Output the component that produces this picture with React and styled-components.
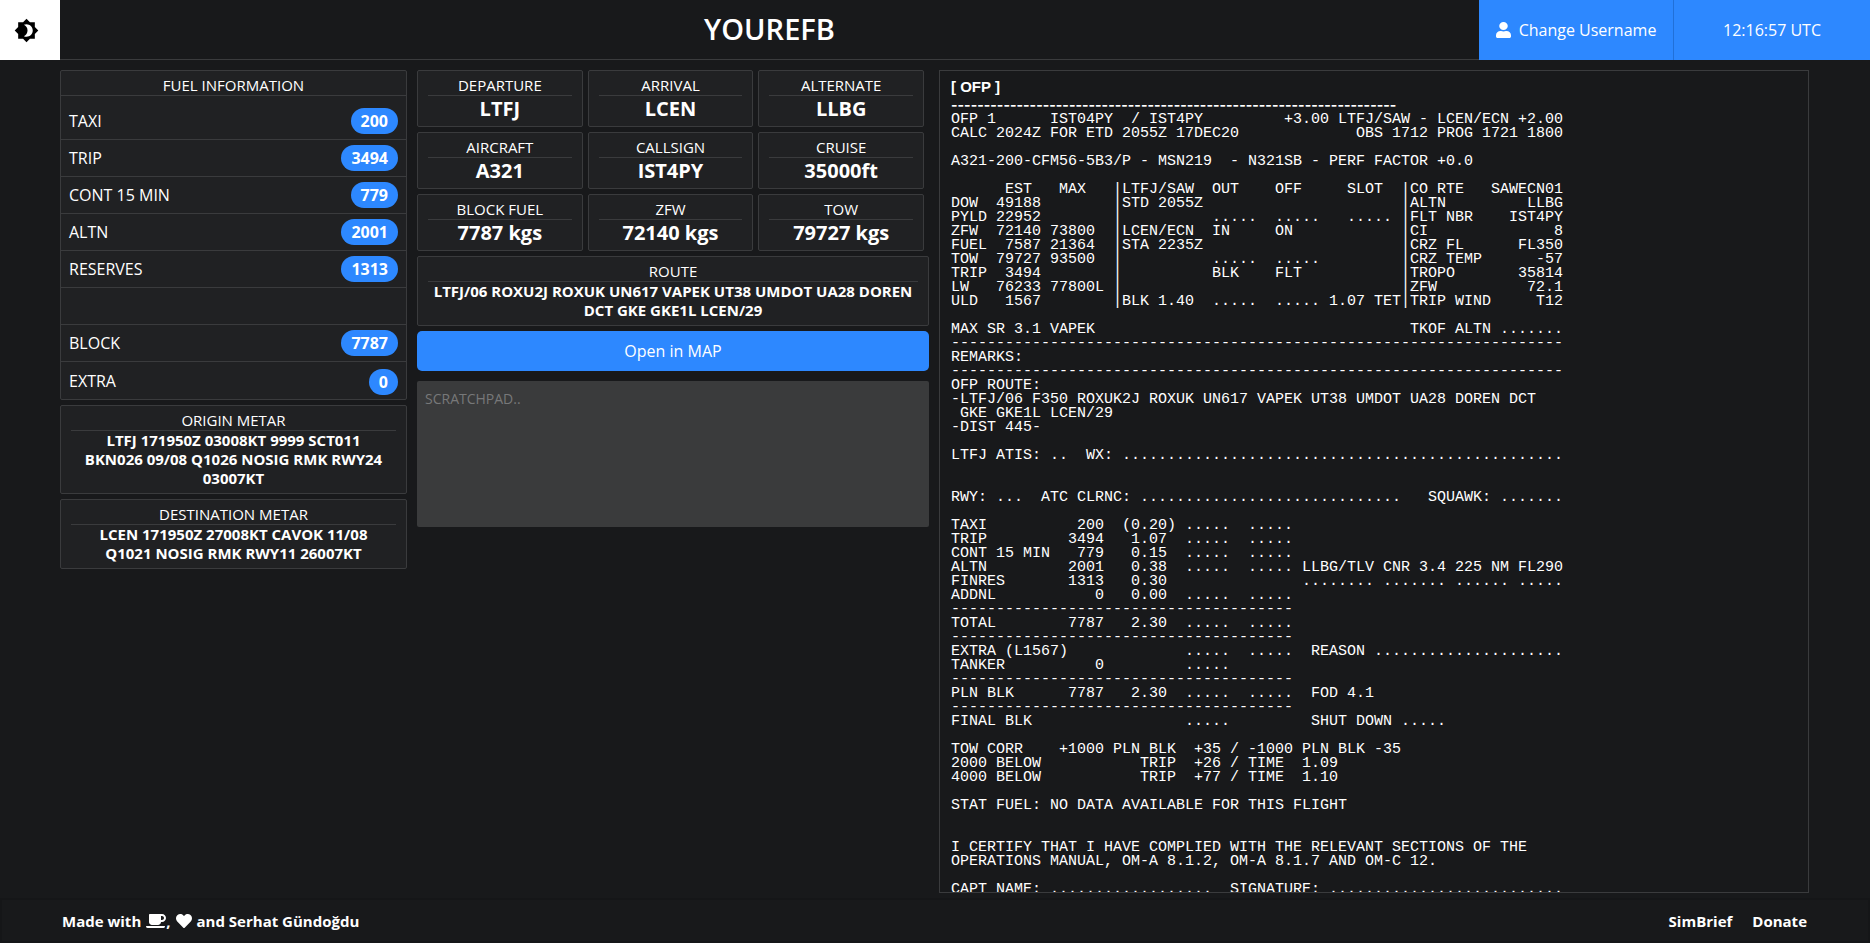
import React from "react";
import styled, { createGlobalStyle, ThemeProvider } from "styled-components";
import { MdBrightness4 } from "react-icons/md";
import { FaUser, FaCoffee, FaHeart } from "react-icons/fa";

const theme = {
  page: "#18191b",
  panel: "#202123",
  line: "#3a3b3d",
  field: "#3a3b3c",
  accent: "#2d88ff",
  accentLine: "#2170d8",
  text: "#ffffff",
  muted: "#777879",
};

const GlobalStyle = createGlobalStyle`
  *, *::before, *::after { box-sizing: border-box; }
  body {
    margin: 0;
    background: ${theme.page};
    color: ${theme.text};
    font-family: "Open Sans", "Noto Sans", sans-serif;
    font-size: 16px;
    line-height: 19px;
  }
  button, textarea { font-family: inherit; }
`;

const Page = styled.div`
  display: flex;
  flex-direction: column;
  height: 100vh;
`;

const Header = styled.header`
  display: flex;
  flex: none;
  height: 60px;
`;

const ThemeToggle = styled.button`
  display: flex;
  align-items: center;
  justify-content: center;
  width: 60px;
  padding: 0 8px 0 0;
  border: 0;
  background: #fff;
  color: #000;
  cursor: pointer;
  svg { width: 25px; height: 25px; }
`;

const TitleBar = styled.div`
  display: flex;
  flex: 1;
  align-items: center;
  justify-content: center;
  padding-bottom: 2px;
  border-bottom: 1px solid ${(p) => p.theme.line};
`;

const Title = styled.h1`
  margin: 0;
  font-size: 29px;
  line-height: 32px;
  font-weight: 600;
`;

const UserButton = styled.button`
  display: flex;
  align-items: center;
  justify-content: center;
  gap: 8px;
  width: 195px;
  padding: 0;
  border: 0;
  border-right: 1px solid ${(p) => p.theme.accentLine};
  background: ${(p) => p.theme.accent};
  color: ${(p) => p.theme.text};
  font-size: 16px;
  cursor: pointer;
  svg { width: 15px; height: 16px; }
`;

const Clock = styled.time`
  display: flex;
  align-items: center;
  justify-content: center;
  width: 196px;
  background: ${(p) => p.theme.accent};
`;

const Main = styled.main`
  display: grid;
  grid-template-columns: 347fr 512fr 870fr;
  grid-template-rows: minmax(0, 1fr);
  gap: 10px;
  flex: 1;
  min-height: 0;
  padding: 10px 61px 5px 60px;
`;

const Column = styled.div`
  display: flex;
  flex-direction: column;
  gap: 5px;
  min-width: 0;
`;

const Panel = styled.section`
  border: 1px solid ${(p) => p.theme.line};
  border-radius: 2px;
  background: ${(p) => p.theme.panel};
  text-align: center;
`;

const PanelTitle = styled.h2`
  margin: 0 ${(p) => (p.$full ? 0 : 10)}px;
  padding-top: 5px;
  border-bottom: 1px solid ${(p) => p.theme.line};
  font-size: 15px;
  line-height: 19px;
  font-weight: 400;
`;

const PanelText = styled.p`
  margin: 0;
  padding: 0 ${(p) => (p.$wide ? 4 : 20)}px 5px;
  font-size: 15px;
  line-height: 19px;
  font-weight: 700;
`;

const PanelValue = styled.p`
  margin: 0;
  padding-bottom: 5px;
  font-size: 20px;
  line-height: 25px;
  font-weight: 700;
`;

const FuelList = styled.ul`
  margin: 0;
  padding: 7px 0 0;
  list-style: none;
`;

const FuelRow = styled.li`
  display: flex;
  align-items: center;
  justify-content: space-between;
  height: 37px;
  padding: 0 8px;
  border-bottom: 1px solid ${(p) => p.theme.line};
  font-weight: 500;
  &:last-child { padding-top: 2px; border-bottom: 0; }
`;

const Badge = styled.span`
  padding: 0 10px;
  border-radius: 13px;
  background: ${(p) => p.theme.accent};
  font-weight: 700;
  line-height: 26px;
`;

const StatGrid = styled.div`
  display: grid;
  grid-template-columns: repeat(3, 1fr);
  gap: 5px;
  padding-right: 5px;
`;

const MapButton = styled.button`
  height: 40px;
  border: 0;
  border-radius: 5px;
  background: ${(p) => p.theme.accent};
  color: ${(p) => p.theme.text};
  font-size: 16px;
  cursor: pointer;
`;

const Scratchpad = styled.textarea`
  height: 146px;
  margin-top: 5px;
  padding: 8px;
  border: 0;
  border-radius: 2px;
  background: ${(p) => p.theme.field};
  color: ${(p) => p.theme.text};
  font-size: 14px;
  line-height: 19px;
  resize: none;
  &::placeholder { color: ${(p) => p.theme.muted}; opacity: 1; }
`;

const PlanPanel = styled.section`
  overflow-y: auto;
  scrollbar-width: none;
  padding: 7px 10px 10px 11px;
  border: 1px solid ${(p) => p.theme.line};
`;

const PlanTitle = styled.h2`
  margin: 0 0 2px;
  font: 700 15px/17px "Liberation Sans", Arial, sans-serif;
`;

const PlanRule = styled.div`
  padding-bottom: 1px;
  font: 700 14px/15px Inter, sans-serif;
  white-space: nowrap;
`;

const PlanText = styled.pre`
  margin: 0;
  font: 400 15px/14px "Liberation Mono", "Courier New", monospace;
`;

const Footer = styled.footer`
  display: flex;
  flex: none;
  align-items: center;
  justify-content: space-between;
  height: 45px;
  padding: 1px 61px 0 60px;
  border: 2px solid #151618;
  font-size: 15px;
  font-weight: 700;
`;

const Credit = styled.p`
  display: flex;
  align-items: center;
  gap: 5px;
  margin: 0;
`;

const CreditIcon = styled.span`
  display: flex;
  align-items: center;
  svg { width: ${(p) => p.$width}px; height: 16px; }
`;

const FooterLinks = styled.nav`
  display: flex;
  gap: 20px;
`;

const FooterLink = styled.a`
  color: inherit;
  text-decoration: none;
`;

const fuel = [
  ["TAXI", 200],
  ["TRIP", 3494],
  ["CONT 15 MIN", 779],
  ["ALTN", 2001],
  ["RESERVES", 1313],
  null,
  ["BLOCK", 7787],
  ["EXTRA", 0],
];

const metars = [
  ["ORIGIN METAR", "LTFJ 171950Z 03008KT 9999 SCT011 BKN026 09/08 Q1026 NOSIG RMK RWY24 03007KT"],
  ["DESTINATION METAR", "LCEN 171950Z 27008KT CAVOK 11/08 Q1021 NOSIG RMK RWY11 26007KT"],
];

const stats = [
  ["DEPARTURE", "LTFJ"],
  ["ARRIVAL", "LCEN"],
  ["ALTERNATE", "LLBG"],
  ["AIRCRAFT", "A321"],
  ["CALLSIGN", "IST4PY"],
  ["CRUISE", "35000ft"],
  ["BLOCK FUEL", "7787 kgs"],
  ["ZFW", "72140 kgs"],
  ["TOW", "79727 kgs"],
];

const route = "LTFJ/06 ROXU2J ROXUK UN617 VAPEK UT38 UMDOT UA28 DOREN DCT GKE GKE1L LCEN/29";

/* The flight plan is printed on a 68 column sheet. */
const SHEET = 68;
const dots = (n) => ".".repeat(n);
const rule = (n) => "-".repeat(n);

/* Each field is [column, text]. */
const line = (...fields) =>
  fields.reduce((out, [col, text]) => out.padEnd(col) + text, "");

const right = (text) => [SHEET - text.length, text];

/* One line of the load table: left figures, times and the route summary. */
const load = (left, mid, label, value) =>
  line(...left, [18, "|"], ...mid, [50, "|"], [51, label], right(value));

const fuelLine = (name, qty, time, slots = [26, 33], extra = []) =>
  line([0, name], [17 - qty.length, qty], ...(time ? [[20 - (time[0] === "(" ? 1 : 0), time]] : []),
    ...slots.map((col) => [col, dots(5)]), ...extra);

const plan = [
  line([0, "OFP 1"], [11, "IST04PY"], [20, "/"], [22, "IST4PY"], right("+3.00 LTFJ/SAW - LCEN/ECN +2.00")),
  line([0, "CALC 2024Z FOR ETD 2055Z 17DEC20"], right("OBS 1712 PROG 1721 1800")),
  "",
  "A321-200-CFM56-5B3/P - MSN219  - N321SB - PERF FACTOR +0.0",
  "",
  load([[6, "EST"], [12, "MAX"]], [[19, "LTFJ/SAW"], [29, "OUT"], [36, "OFF"], [44, "SLOT"]], "CO RTE", "SAWECN01"),
  load([[0, "DOW"], [5, "49188"]], [[19, "STD 2055Z"]], "ALTN", "LLBG"),
  load([[0, "PYLD"], [5, "22952"]], [[29, dots(5)], [36, dots(5)], [44, dots(5)]], "FLT NBR", "IST4PY"),
  load([[0, "ZFW"], [5, "72140"], [11, "73800"]], [[19, "LCEN/ECN"], [29, "IN"], [36, "ON"]], "CI", "8"),
  load([[0, "FUEL"], [6, "7587"], [11, "21364"]], [[19, "STA 2235Z"]], "CRZ FL", "FL350"),
  load([[0, "TOW"], [5, "79727"], [11, "93500"]], [[29, dots(5)], [36, dots(5)]], "CRZ TEMP", "-57"),
  load([[0, "TRIP"], [6, "3494"]], [[29, "BLK"], [36, "FLT"]], "TROPO", "35814"),
  load([[0, "LW"], [5, "76233"], [11, "77800L"]], [], "ZFW", "72.1"),
  load([[0, "ULD"], [6, "1567"]], [[19, "BLK 1.40"], [29, dots(5)], [36, dots(5)], [42, "1.07 TET"]], "TRIP WIND", "T12"),
  "",
  line([0, "MAX SR 3.1 VAPEK"], right("TKOF ALTN " + dots(7))),
  rule(SHEET),
  "REMARKS:",
  rule(SHEET),
  "OFP ROUTE:",
  "-LTFJ/06 F350 ROXUK2J ROXUK UN617 VAPEK UT38 UMDOT UA28 DOREN DCT",
  " GKE GKE1L LCEN/29",
  "-DIST 445-",
  "",
  line([0, "LTFJ ATIS: .."], [15, "WX:"], right(dots(49))),
  "",
  "",
  line([0, "RWY: ..."], [10, "ATC CLRNC:"], [21, dots(29)], [53, "SQUAWK:"], right(dots(7))),
  "",
  fuelLine("TAXI", "200", "(0.20)"),
  fuelLine("TRIP", "3494", "1.07"),
  fuelLine("CONT 15 MIN", "779", "0.15"),
  fuelLine("ALTN", "2001", "0.38", [26, 33], [[39, "LLBG/TLV CNR 3.4 225 NM FL290"]]),
  fuelLine("FINRES", "1313", "0.30", [], [[39, "........ ....... ...... ....."]]),
  fuelLine("ADDNL", "0", "0.00"),
  rule(38),
  fuelLine("TOTAL", "7787", "2.30"),
  rule(38),
  fuelLine("EXTRA (L1567)", "", "", [26, 33], [[40, "REASON"], [47, dots(21)]]),
  fuelLine("TANKER", "0", "", [26]),
  rule(38),
  fuelLine("PLN BLK", "7787", "2.30", [26, 33], [[40, "FOD 4.1"]]),
  rule(38),
  fuelLine("FINAL BLK", "", "", [26], [[40, "SHUT DOWN " + dots(5)]]),
  "",
  line([0, "TOW CORR"], [12, "+1000 PLN BLK"], [27, "+35 / -1000 PLN BLK -35"]),
  line([0, "2000 BELOW"], [21, "TRIP"], [27, "+26 / TIME"], [39, "1.09"]),
  line([0, "4000 BELOW"], [21, "TRIP"], [27, "+77 / TIME"], [39, "1.10"]),
  "",
  "STAT FUEL: NO DATA AVAILABLE FOR THIS FLIGHT",
  "",
  "",
  "I CERTIFY THAT I HAVE COMPLIED WITH THE RELEVANT SECTIONS OF THE",
  "OPERATIONS MANUAL, OM-A 8.1.2, OM-A 8.1.7 AND OM-C 12.",
  "",
  line([0, "CAPT NAME: " + dots(18)], [31, "SIGNATURE:"], right(dots(26))),
].join("\n");

export default function App() {
  return (
    <ThemeProvider theme={theme}>
      <GlobalStyle />
      <Page>
        <Header>
          <ThemeToggle type="button" aria-label="Toggle theme">
            <MdBrightness4 />
          </ThemeToggle>
          <TitleBar>
            <Title>YOUREFB</Title>
          </TitleBar>
          <UserButton type="button">
            <FaUser preserveAspectRatio="none" />
            Change Username
          </UserButton>
          <Clock>12:16:57 UTC</Clock>
        </Header>

        <Main>
          <Column>
            <Panel>
              <PanelTitle $full>FUEL INFORMATION</PanelTitle>
              <FuelList>
                {fuel.map((item, i) => (
                  <FuelRow key={i}>
                    {item && <span>{item[0]}</span>}
                    {item && <Badge>{item[1]}</Badge>}
                  </FuelRow>
                ))}
              </FuelList>
            </Panel>
            {metars.map(([name, text]) => (
              <Panel key={name}>
                <PanelTitle>{name}</PanelTitle>
                <PanelText>{text}</PanelText>
              </Panel>
            ))}
          </Column>

          <Column>
            <StatGrid>
              {stats.map(([name, value]) => (
                <Panel key={name}>
                  <PanelTitle>{name}</PanelTitle>
                  <PanelValue>{value}</PanelValue>
                </Panel>
              ))}
            </StatGrid>
            <Panel>
              <PanelTitle>ROUTE</PanelTitle>
              <PanelText $wide>{route}</PanelText>
            </Panel>
            <MapButton type="button">Open in MAP</MapButton>
            <Scratchpad aria-label="Scratchpad" placeholder="SCRATCHPAD.." />
          </Column>

          <PlanPanel>
            <PlanTitle>[ OFP ]</PlanTitle>
            <PlanRule>{rule(SHEET)}</PlanRule>
            <PlanText>{plan}</PlanText>
          </PlanPanel>
        </Main>

        <Footer>
          <Credit>
            <span>Made with</span>
            <CreditIcon $width={20}><FaCoffee />,</CreditIcon>
            <CreditIcon $width={16}><FaHeart /></CreditIcon>
            <span>and Serhat Gündoğdu</span>
          </Credit>
          <FooterLinks>
            <FooterLink href="#simbrief">SimBrief</FooterLink>
            <FooterLink href="#donate">Donate</FooterLink>
          </FooterLinks>
        </Footer>
      </Page>
    </ThemeProvider>
  );
}
